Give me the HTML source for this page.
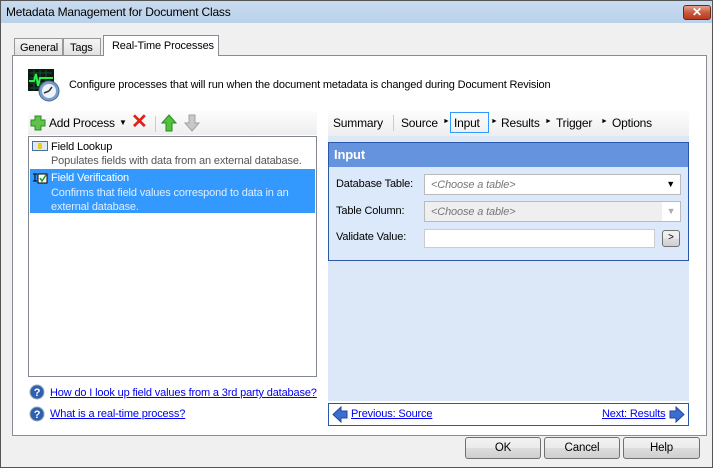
<!DOCTYPE html>
<html><head><meta charset="utf-8"><style>
*{box-sizing:border-box;margin:0;padding:0}
body{width:713px;height:468px;overflow:hidden;background:#f0f0f0;font-family:"Liberation Sans",sans-serif;font-size:11px;letter-spacing:-0.15px;color:#000;position:relative}
.a{position:absolute;white-space:nowrap}
a,.lnk{color:#0000ee;text-decoration:underline}
.btn{position:absolute;height:22px;border:1px solid #707070;border-radius:3px;background:linear-gradient(#f2f2f2,#ebebeb 50%,#dddddd 51%,#cfcfcf);text-align:center;line-height:20px;font-size:11.5px}
.nv{font-size:12px;letter-spacing:-0.2px}
</style></head><body>
<div class="a" style="left:0;top:0;width:713px;height:468px;border:1px solid #555;"></div>
<div class="a" style="left:1px;top:1px;width:711px;height:22px;background:linear-gradient(#c9dbef,#b9d1ea);"></div>
<div class="a" style="left:6px;top:5px;font-size:12px;letter-spacing:-0.2px">Metadata Management for Document Class</div>
<div class="a" style="left:683px;top:5px;width:28px;height:15px;border:1px solid #6b2a20;border-radius:3px;background:linear-gradient(#e8a08c,#c75a3f 50%,#b8391d);color:#fff;font-weight:bold;text-align:center;line-height:13px;font-size:12px">✕</div>
<div class="a" style="left:14px;top:38px;width:49px;height:18px;border:1px solid #999;border-bottom:none;background:linear-gradient(#f5f5f5,#e0e0e0);padding:3px 0 0 5px">General</div>
<div class="a" style="left:63px;top:38px;width:38px;height:18px;border:1px solid #999;border-bottom:none;background:linear-gradient(#f5f5f5,#e0e0e0);padding:3px 0 0 6px">Tags</div>
<div class="a" style="left:12px;top:55px;width:695px;height:381px;border:1px solid #898c95;background:#fff"></div>
<div class="a" style="left:103px;top:35px;width:116px;height:21px;border:1px solid #898c95;border-bottom:none;background:#fff;padding:4px 0 0 8px">Real-Time Processes</div>
<svg class="a" style="left:28px;top:69px" width="33" height="33"><rect x="0" y="0" width="26" height="22" fill="#0a1a10"/><path d="M2 4H24M2 9H24M2 14H24M2 19H24M6 1V21M12 1V21M18 1V21" stroke="#1d5030" stroke-width="1"/><path d="M1 12H6L8 5L10 17L12 9H25" stroke="#2bf04a" stroke-width="2" fill="none"/><circle cx="21" cy="22" r="10" fill="#7a9ec8" stroke="#4a6a98"/><circle cx="21" cy="22" r="7" fill="#eef3fa"/><path d="M21 22L16 24M21 22L24 18" stroke="#333" stroke-width="1.5"/></svg>
<div class="a" style="left:69px;top:79px">Configure processes that will run when the document metadata is changed during Document Revision</div>
<div class="a" style="left:28px;top:111px;width:289px;height:24px;background:linear-gradient(#fdfdfd,#eeeeee)"></div>
<svg class="a" style="left:30px;top:115px" width="16" height="16"><path d="M5 1H11V5H15V11H11V15H5V11H1V5H5Z" fill="#5fc24a" stroke="#2f8a22"/></svg>
<div class="a nv" style="left:49px;top:116px">Add Process</div>
<div class="a" style="left:119px;top:118px;font-size:8px">▼</div>
<div class="a" style="left:131px;top:111px;color:#e0201a;font-size:20px;font-weight:bold;line-height:22px">✕</div>
<div class="a" style="left:155px;top:116px;width:1px;height:16px;background:#ccc"></div>
<svg class="a" style="left:161px;top:114px" width="16" height="18"><path d="M8 1L15 9H11V17H5V9H1Z" fill="#52c23a" stroke="#2a8a1e"/></svg>
<svg class="a" style="left:184px;top:114px" width="16" height="18"><path d="M8 17L15 9H11V1H5V9H1Z" fill="#c8c8c8" stroke="#a0a0a0"/></svg>
<div class="a" style="left:28px;top:136px;width:289px;height:241px;border:1px solid #828790;background:#fff"></div>
<svg class="a" style="left:32px;top:141px" width="16" height="11"><rect x="0.5" y="0.5" width="15" height="9" fill="#dfe8f5" stroke="#4a6fa8"/><rect x="6" y="2" width="4" height="6" fill="#e8d020"/></svg>
<div class="a" style="left:51px;top:141px">Field Lookup</div>
<div class="a" style="left:51px;top:155px;color:#555">Populates fields with data from an external database.</div>
<div class="a" style="left:30px;top:169px;width:285px;height:44px;background:#3399ff"></div>
<svg class="a" style="left:32px;top:172px" width="16" height="12"><rect x="6" y="2" width="9" height="9" fill="#fff" stroke="#000"/><path d="M1 2H5M3 2V9M1 9H5" stroke="#000"/><path d="M8 6L10 9L14 3" stroke="#1a9a1a" stroke-width="1.5" fill="none"/></svg>
<div class="a" style="left:51px;top:172px;color:#fff">Field Verification</div>
<div class="a" style="left:51px;top:186px;color:#e0eeff;line-height:14px">Confirms that field values correspond to data in an<br>external database.</div>
<svg class="a" style="left:29px;top:384px" width="16" height="16"><circle cx="8" cy="8" r="7" fill="#2f5fb0" stroke="#9aa"/><text x="8" y="12" font-size="11" font-weight="bold" fill="#fff" text-anchor="middle" font-family="Liberation Sans">?</text></svg>
<div class="a lnk" style="left:50px;top:387px;font-size:11px">How do I look up field values from a 3rd party database?</div>
<svg class="a" style="left:29px;top:406px" width="16" height="16"><circle cx="8" cy="8" r="7" fill="#2f5fb0" stroke="#9aa"/><text x="8" y="12" font-size="11" font-weight="bold" fill="#fff" text-anchor="middle" font-family="Liberation Sans">?</text></svg>
<div class="a lnk" style="left:50px;top:408px;font-size:11px">What is a real-time process?</div>
<div class="a" style="left:328px;top:111px;width:361px;height:25px;background:linear-gradient(#fdfdfd,#eeeeee)"></div>
<div class="a nv" style="left:333px;top:116px">Summary</div>
<div class="a" style="left:393px;top:115px;width:1px;height:16px;background:#ccc"></div>
<div class="a nv" style="left:401px;top:116px">Source</div>
<div class="a" style="left:443px;top:118px;font-size:7px">►</div>
<div class="a" style="left:450px;top:112px;width:39px;height:21px;border:1px solid #3399ff"></div>
<div class="a nv" style="left:454px;top:116px">Input</div>
<div class="a" style="left:491px;top:118px;font-size:7px">►</div>
<div class="a nv" style="left:501px;top:116px">Results</div>
<div class="a" style="left:545px;top:118px;font-size:7px">►</div>
<div class="a nv" style="left:556px;top:116px">Trigger</div>
<div class="a" style="left:601px;top:118px;font-size:7px">►</div>
<div class="a nv" style="left:612px;top:116px">Options</div>
<div class="a" style="left:328px;top:136px;width:361px;height:265px;background:#dce8f8"></div>
<div class="a" style="left:328px;top:142px;width:361px;height:119px;border:1px solid #2b57a8;background:#dce9fa"></div>
<div class="a" style="left:329px;top:143px;width:359px;height:24px;background:#6593de;color:#fff;font-weight:bold;font-size:13px;padding:4px 0 0 5px">Input</div>
<div class="a" style="left:336px;top:178px">Database Table:</div>
<div class="a" style="left:424px;top:174px;width:257px;height:21px;border:1px solid #bbb;background:#fff;color:#777;font-style:italic;padding:4px 0 0 6px">&lt;Choose a table&gt;<span style="position:absolute;right:5px;top:4px;color:#000;font-style:normal;font-size:9px">▼</span></div>
<div class="a" style="left:336px;top:205px">Table Column:</div>
<div class="a" style="left:424px;top:201px;width:257px;height:21px;border:1px solid #bbb;background:#efefef;color:#777;font-style:italic;padding:4px 0 0 6px">&lt;Choose a table&gt;<span style="position:absolute;right:0;top:0;width:18px;height:19px;background:#fff;color:#aaa;font-style:normal;font-size:9px;text-align:center;line-height:19px">▼</span></div>
<div class="a" style="left:336px;top:231px">Validate Value:</div>
<div class="a" style="left:424px;top:229px;width:231px;height:19px;border:1px solid #ccc;background:#fff"></div>
<div class="btn" style="left:662px;top:230px;width:18px;height:17px;line-height:14px;font-size:10px">&gt;</div>
<div class="a" style="left:328px;top:403px;width:361px;height:23px;border:1px solid #2b57a8;background:#fff"></div>
<svg class="a" style="left:332px;top:406px" width="16" height="17"><path d="M1 8.5L9 1V5H15V12H9V16Z" fill="#3a6ed0" stroke="#1f4a9a"/></svg>
<div class="a lnk" style="left:351px;top:408px;font-size:11px">Previous: Source</div>
<div class="a lnk" style="left:602px;top:408px;font-size:11px">Next: Results</div>
<svg class="a" style="left:669px;top:406px" width="16" height="17"><path d="M15 8.5L7 1V5H1V12H7V16Z" fill="#3a6ed0" stroke="#1f4a9a"/></svg>
<div class="btn" style="left:465px;top:437px;width:76px">OK</div>
<div class="btn" style="left:544px;top:437px;width:76px">Cancel</div>
<div class="btn" style="left:623px;top:437px;width:77px">Help</div>
</body></html>
